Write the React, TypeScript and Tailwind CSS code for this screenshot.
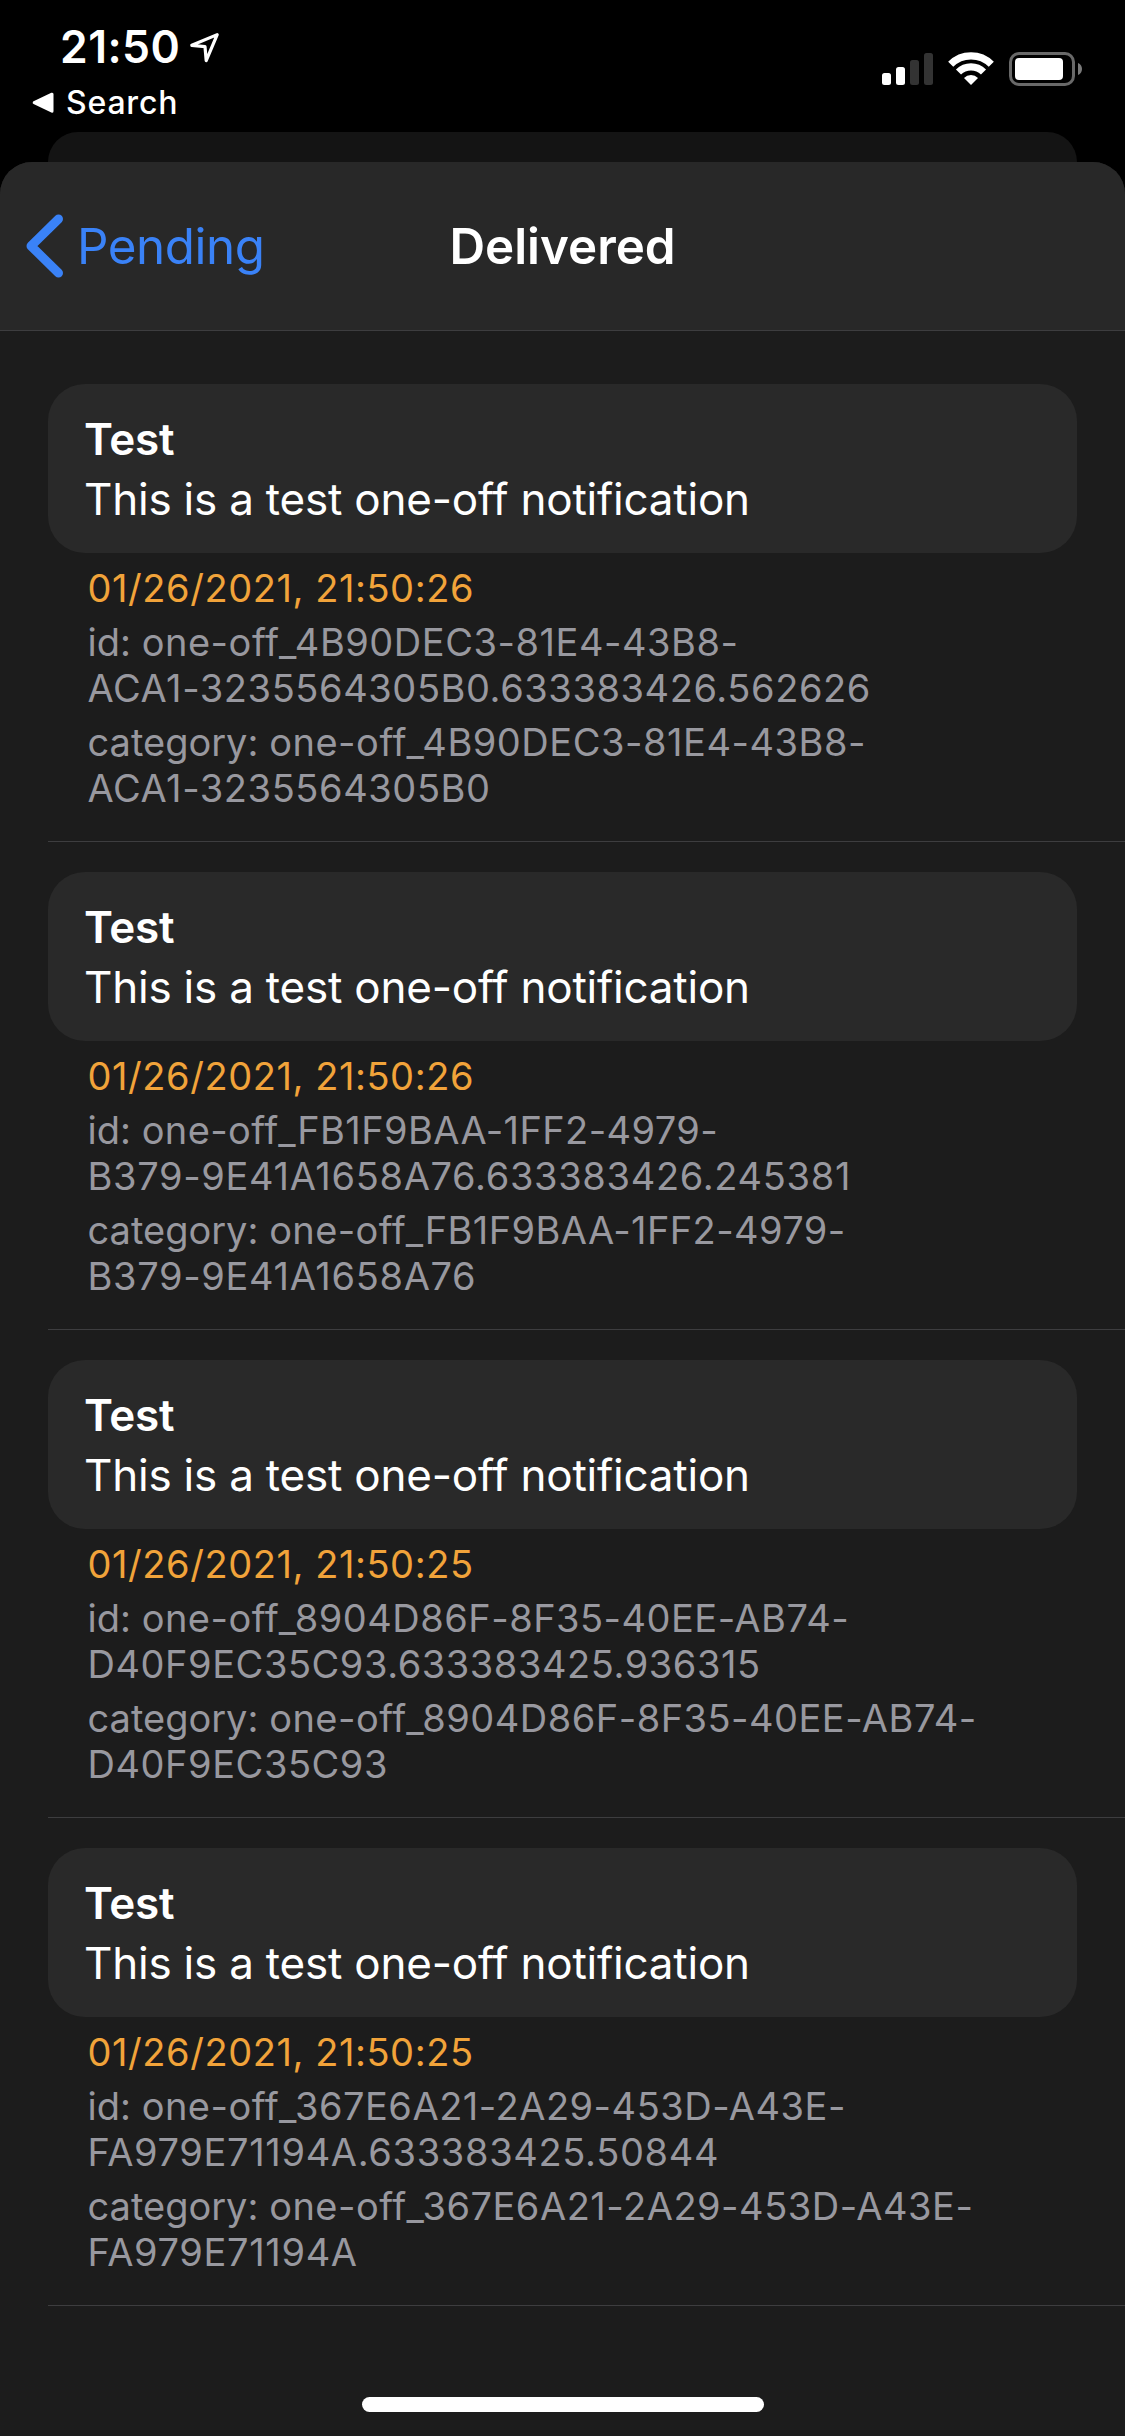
import React from "react";

interface Delivered {
  date: string;
  id: [string, string];
  category: [string, string];
  headTracking: string;
  tailTracking: string;
}

const notifications: Delivered[] = [
  {
    date: "01/26/2021, 21:50:26",
    id: ["one-off_4B90DEC3-81E4-43B8-", "ACA1-3235564305B0.633383426.562626"],
    category: ["one-off_4B90DEC3-81E4-43B8-", "ACA1-3235564305B0"],
    headTracking: "tracking-[0.53px]",
    tailTracking: "tracking-[0.58px]",
  },
  {
    date: "01/26/2021, 21:50:26",
    id: ["one-off_FB1F9BAA-1FF2-4979-", "B379-9E41A1658A76.633383426.245381"],
    category: ["one-off_FB1F9BAA-1FF2-4979-", "B379-9E41A1658A76"],
    headTracking: "tracking-[0.4px]",
    tailTracking: "tracking-[0.67px]",
  },
  {
    date: "01/26/2021, 21:50:25",
    id: ["one-off_8904D86F-8F35-40EE-AB74-", "D40F9EC35C93.633383425.936315"],
    category: ["one-off_8904D86F-8F35-40EE-AB74-", "D40F9EC35C93"],
    headTracking: "tracking-[0.48px]",
    tailTracking: "tracking-[0.55px]",
  },
  {
    date: "01/26/2021, 21:50:25",
    id: ["one-off_367E6A21-2A29-453D-A43E-", "FA979E71194A.633383425.50844"],
    category: ["one-off_367E6A21-2A29-453D-A43E-", "FA979E71194A"],
    headTracking: "tracking-[0.5px]",
    tailTracking: "tracking-[0.66px]",
  },
];

function LocationIcon() {
  return (
    <svg width="32" height="32" viewBox="0 0 32 32" fill="none" stroke="white" strokeWidth="3.2" strokeLinejoin="round">
      <path d="M28.2 3.6 L2.8 14.3 L16 15.6 L17.2 29.6 Z" />
    </svg>
  );
}

function BackTriangle() {
  return (
    <svg width="22" height="22" viewBox="0 0 22 22" fill="white" stroke="white" strokeWidth="3" strokeLinejoin="round">
      <path d="M20 2.2 V19.2 L2.2 10.7 Z" />
    </svg>
  );
}

function SignalIcon() {
  return (
    <svg width="51" height="34" viewBox="0 0 51 34">
      <rect x="0" y="21" width="9" height="12" rx="2.5" fill="white" />
      <rect x="14" y="15" width="9" height="18" rx="2.5" fill="white" />
      <rect x="28" y="8" width="9" height="25" rx="2.5" fill="#333333" />
      <rect x="42" y="1" width="9" height="32" rx="2.5" fill="#333333" />
    </svg>
  );
}

function WifiIcon() {
  return (
    <svg width="46" height="34" viewBox="0 0 46 34" fill="none" stroke="white" strokeWidth="7.2">
      <path d="M2.7 12.2 A28.7 28.7 0 0 1 43.3 12.2" />
      <path d="M10.5 20 A17.7 17.7 0 0 1 35.5 20" />
      <path d="M23 33 L16 26 A9.9 9.9 0 0 1 30 26 Z" fill="white" stroke="none" />
    </svg>
  );
}

function BatteryIcon() {
  return (
    <svg width="73" height="34" viewBox="0 0 73 34">
      <rect x="1.5" y="1.5" width="63" height="31" rx="8.5" fill="none" stroke="#696969" strokeWidth="3" />
      <rect x="6" y="6" width="48" height="22" rx="4" fill="white" />
      <path d="M69 11 C71.8 12 73 14.5 73 17 C73 19.500 71.8 22 69 23 Z" fill="#7a7a7a" />
    </svg>
  );
}

function StatusBar() {
  return (
    <div className="flex h-[132px] items-start justify-between pt-5 pr-[43px] pl-8">
      <div className="flex flex-col gap-[9px]">
        <div className="flex h-[54px] items-center gap-[9px] pl-7">
          <span className="text-[44.5px] leading-[54px] font-semibold tracking-[0.45px]">21:50</span>
          <LocationIcon />
        </div>
        <div className="flex h-10 items-center gap-3">
          <BackTriangle />
          <span className="text-[32px] leading-10 font-[450] tracking-[0.8px]">Search</span>
        </div>
      </div>
      <div className="flex items-center pt-8">
        <SignalIcon />
        <div className="pr-[15px] pl-[15px]">
          <WifiIcon />
        </div>
        <BatteryIcon />
      </div>
    </div>
  );
}

function NavBar() {
  return (
    <header className="grid h-[169px] grid-cols-3 items-center border-b border-[#3d3d3f] bg-[#282828] text-[49.3px] leading-[60px]">
      <button className="flex items-center gap-3 pl-[25px] tracking-[-0.45px] text-[#3a82f7]">
        <svg width="40" height="66" viewBox="0 0 40 66" fill="none" stroke="currentColor" strokeWidth="9" strokeLinecap="round" strokeLinejoin="round">
          <path d="M33.5 6 L6 33 L33.5 60" />
        </svg>
        <span>Pending</span>
      </button>
      <h1 className="text-center font-semibold">Delivered</h1>
    </header>
  );
}

interface DetailProps {
  label: string;
  lines: [string, string];
  head: string;
  tail: string;
}

function Detail({ label, lines, head, tail }: DetailProps) {
  return (
    <p className="text-[#98989f]">
      <span className="block">
        {label}: <span className={head}>{lines[0]}</span>
      </span>
      <span className={`block ${tail}`}>{lines[1]}</span>
    </p>
  );
}

function NotificationRow({ item }: { item: Delivered }) {
  return (
    <li className="ml-12 border-b border-[#3d3d3f] pt-[30px] pb-[30px]">
      <div className="mr-12 rounded-[37px] bg-[#292929] pt-[25px] pr-9 pb-6 pl-9 text-[44px] leading-[60px] text-white">
        <h2 className="font-semibold tracking-[-0.3px]">Test</h2>
        <p className="tracking-[-0.22px]">This is a test one-off notification</p>
      </div>
      <div className="flex flex-col gap-2 pt-3 pl-[39.5px] text-[38px] leading-[46px]">
        <p className="tracking-[0.56px] text-[#f1a33a]">{item.date}</p>
        <Detail label="id" lines={item.id} head={item.headTracking} tail={item.tailTracking} />
        <Detail label="category" lines={item.category} head={item.headTracking} tail={item.tailTracking} />
      </div>
    </li>
  );
}

export default function App() {
  return (
    <div className="flex h-[2436px] w-[1125px] flex-col overflow-hidden bg-black font-[Inter,sans-serif] text-white">
      <StatusBar />
      <div className="mx-12 h-[30px] shrink-0 rounded-t-[30px] bg-[#141414]" />
      <main className="flex grow flex-col overflow-hidden rounded-t-[32px] bg-[#1c1c1c]">
        <NavBar />
        <ul className="pt-[23px]">
          {notifications.map((item, i) => (
            <NotificationRow key={i} item={item} />
          ))}
        </ul>
        <div className="mt-auto mb-6 ml-[362px] h-[15px] w-[402px] rounded-full bg-white" />
      </main>
    </div>
  );
}
